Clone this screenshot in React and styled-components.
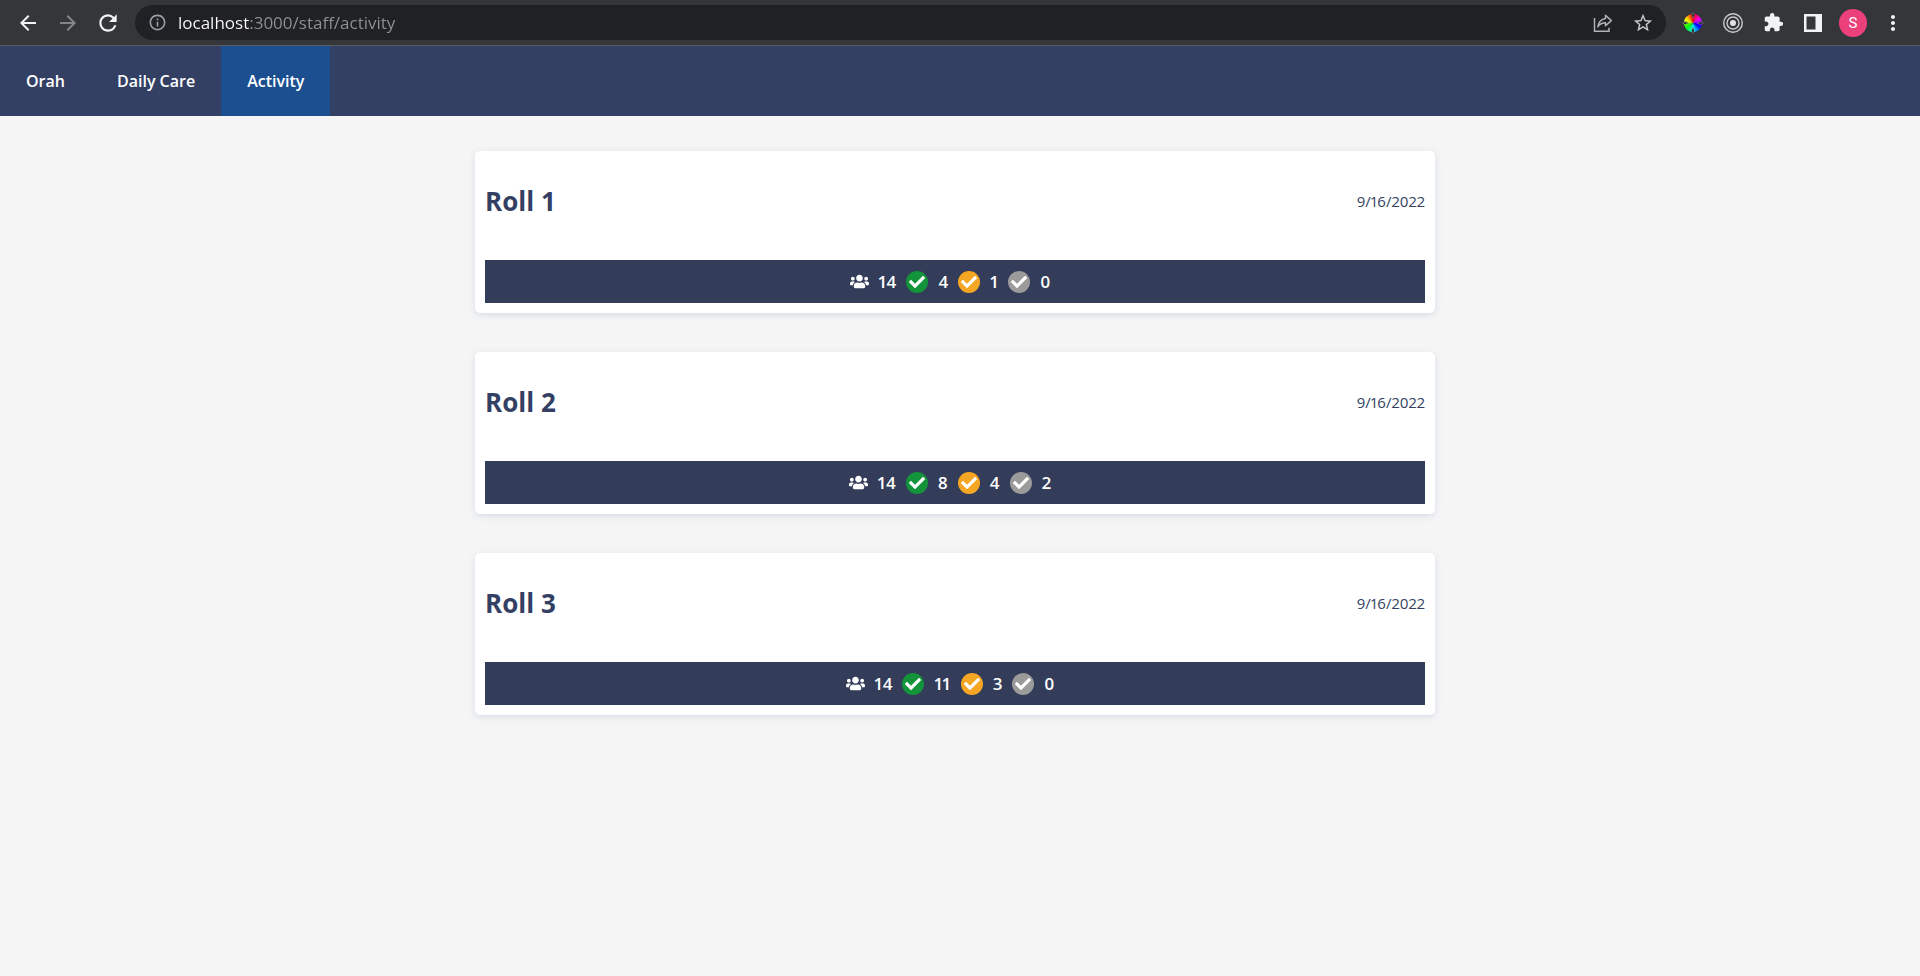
import React from "react";
import styled, { createGlobalStyle } from "styled-components";
import {
  MdArrowBack,
  MdArrowForward,
  MdRefresh,
  MdInfoOutline,
  MdStarBorder,
  MdExtension,
  MdMoreVert,
} from "react-icons/md";
import { FaUsers, FaCheck } from "react-icons/fa";

const GlobalStyle = createGlobalStyle`
  * { box-sizing: border-box; }
  body {
    margin: 0;
    min-height: 100vh;
    background: #f5f5f5;
    color: #343f64;
    font-family: "Open Sans", "Noto Sans", sans-serif;
  }
`;

const BrowserBar = styled.div`
  display: flex;
  align-items: center;
  height: 46px;
  padding: 0 15px 0 16px;
  background: #35363a;
  border-bottom: 1px solid #5b5c5f;
`;

const ToolGroup = styled.div`
  display: flex;
  align-items: center;
  gap: 16px;
`;

const ToolButton = styled.button`
  display: flex;
  align-items: center;
  justify-content: center;
  width: 24px;
  height: 24px;
  padding: 0;
  border: 0;
  background: none;
  color: ${({ $color }) => $color || "#f1f3f4"};
  cursor: pointer;
  svg { flex: none; display: block; }
`;

const AddressBar = styled.div`
  display: flex;
  flex: 1;
  align-items: center;
  height: 35px;
  margin: 0 15px;
  padding: 0 11px 0 13px;
  border-radius: 18px;
  background: #202124;
  color: #9aa0a6;
`;

const AddressInput = styled.input`
  flex: 1;
  min-width: 0;
  height: 30px;
  margin: 0;
  padding: 0 0 0 11px;
  border: 0;
  outline: 0;
  font: 400 17px "Open Sans", "Noto Sans", sans-serif;
  color: transparent;
  background: linear-gradient(90deg, #ffffff 82px, #8e9195 82px);
  -webkit-background-clip: text;
  background-clip: text;
`;

const Avatar = styled.button`
  width: 28px;
  height: 28px;
  margin: 0 -2px;
  padding: 0;
  border: 0;
  border-radius: 50%;
  background: #ec407a;
  color: #ffffff;
  font: 400 15px Roboto, sans-serif;
  cursor: pointer;
`;

const NavBar = styled.nav`
  display: flex;
  height: 70px;
  background: #343f64;
`;

const NavLink = styled.a`
  display: flex;
  align-items: center;
  padding: 0 26px;
  background: ${({ $active }) => ($active ? "#1b4f90" : "transparent")};
  color: #ffffff;
  font-size: 16px;
  font-weight: 600;
  text-decoration: none;
`;

const Main = styled.main`
  display: flex;
  flex-direction: column;
  align-items: center;
  gap: 39px;
  padding: 35px 10px 35px 0;
`;

const Card = styled.article`
  width: 100%;
  max-width: 960px;
  padding: 10px;
  border-radius: 5px;
  background: #ffffff;
  box-shadow: 0 2px 7px rgba(5, 66, 145, 0.13);
`;

const CardHeader = styled.header`
  display: flex;
  align-items: center;
  justify-content: space-between;
  height: 99px;
  padding-bottom: 20px;
`;

const CardTitle = styled.h2`
  margin: 0;
  font-size: 26px;
  line-height: 36px;
`;

const CardDate = styled.time`
  font-size: 15px;
  font-weight: 500;
  font-variant-numeric: proportional-nums;
`;

const StatBar = styled.div`
  display: flex;
  align-items: center;
  justify-content: center;
  height: 43px;
  background: #333c59;
  color: #ffffff;
`;

const Stat = styled.span`
  display: flex;
  align-items: center;
  gap: 10px;
  margin-right: 10px;
  font-size: 17px;
  font-weight: 600;
  font-variant-numeric: proportional-nums;
`;

const StateIcon = styled.span`
  display: flex;
  align-items: center;
  justify-content: center;
  width: 22px;
  height: 22px;
  border-radius: 50%;
  background: ${({ $color }) => $color};
`;

const ShareIcon = () => (
  <svg width="20" height="20" viewBox="0 0 20 20" fill="none" stroke="currentColor" strokeWidth="1.5">
    <path d="M1.5 5v13.2h14.5v-3.5" />
    <path d="M12.5 2.3 18.3 7.6 12.5 12.8V9.8C9 9.8 6.8 11 4.8 13.8 5.5 9.5 8 6 12.5 5.4Z" strokeLinejoin="round" />
  </svg>
);

const wheelAngles = Array.from({ length: 24 }, (_, i) => i * 15);

const ColorWheelIcon = () => (
  <svg width="22" height="22" viewBox="-11 -11 22 22">
    {wheelAngles.map((angle) => (
      <path key={angle} d="M0 0V-9A9 9 0 0 1 2.8 -8.55Z" fill={`hsl(${350 - angle} 100% 50%)`} transform={`rotate(${angle})`} />
    ))}
    {[0, 90, 180, 270].map((angle) => (
      <path key={angle} d="M0 -10.5 1.3 -7.8 0 -4.5 -1.3 -7.8Z" fill="#202124" stroke="#8d8d8d" strokeWidth=".5" transform={`rotate(${angle})`} />
    ))}
  </svg>
);

const TargetIcon = () => (
  <svg width="22" height="22" viewBox="0 0 22 22" fill="none" stroke="#c9cacc" strokeWidth="1.4">
    <circle cx="11" cy="11" r="9.3" />
    <circle cx="11" cy="11" r="6" />
    <circle cx="11" cy="11" r="3" fill="#e3e3e3" stroke="none" />
  </svg>
);

const SidePanelIcon = () => (
  <svg width="18" height="18" viewBox="0 0 18 18">
    <path fill="currentColor" fillRule="evenodd" d="M0 0H18V18H0ZM2.5 2.5V15.5H11.5V2.5Z" />
  </svg>
);

const links = ["Orah", "Daily Care", "Activity"];

const rolls = [
  { name: "Roll 1", date: "9/16/2022", counts: [14, 4, 1, 0] },
  { name: "Roll 2", date: "9/16/2022", counts: [14, 8, 4, 2] },
  { name: "Roll 3", date: "9/16/2022", counts: [14, 11, 3, 0] },
];

const stateColors = ["#13943b", "#f5a623", "#9b9b9b"];

function RollCard({ name, date, counts }) {
  const [total, ...states] = counts;
  return (
    <Card>
      <CardHeader>
        <CardTitle>{name}</CardTitle>
        <CardDate>{date}</CardDate>
      </CardHeader>
      <StatBar>
        <Stat>
          <FaUsers size={19} />
          {total}
        </Stat>
        {states.map((count, i) => (
          <Stat key={stateColors[i]}>
            <StateIcon $color={stateColors[i]}>
              <FaCheck size={16} />
            </StateIcon>
            {count}
          </Stat>
        ))}
      </StatBar>
    </Card>
  );
}

export default function App() {
  return (
    <>
      <GlobalStyle />
      <BrowserBar>
        <ToolGroup>
          <ToolButton aria-label="Back"><MdArrowBack size={24} /></ToolButton>
          <ToolButton aria-label="Forward" $color="#85868a"><MdArrowForward size={24} /></ToolButton>
          <ToolButton aria-label="Reload"><MdRefresh size={26} /></ToolButton>
        </ToolGroup>
        <AddressBar>
          <MdInfoOutline size={19} />
          <AddressInput aria-label="Address" defaultValue="localhost:3000/staff/activity" spellCheck={false} />
          <ToolGroup>
            <ToolButton aria-label="Share" $color="#b0b3b8"><ShareIcon /></ToolButton>
            <ToolButton aria-label="Bookmark" $color="#c4c7cb"><MdStarBorder size={22} /></ToolButton>
          </ToolGroup>
        </AddressBar>
        <ToolGroup>
          <ToolButton aria-label="Color picker"><ColorWheelIcon /></ToolButton>
          <ToolButton aria-label="Recorder"><TargetIcon /></ToolButton>
          <ToolButton aria-label="Extensions"><MdExtension size={21} /></ToolButton>
          <ToolButton aria-label="Side panel"><SidePanelIcon /></ToolButton>
          <Avatar aria-label="Profile">S</Avatar>
          <ToolButton aria-label="Menu"><MdMoreVert size={24} /></ToolButton>
        </ToolGroup>
      </BrowserBar>
      <NavBar>
        {links.map((label) => (
          <NavLink key={label} href="#" $active={label === "Activity"}>{label}</NavLink>
        ))}
      </NavBar>
      <Main>
        {rolls.map((roll) => (
          <RollCard key={roll.name} {...roll} />
        ))}
      </Main>
    </>
  );
}
